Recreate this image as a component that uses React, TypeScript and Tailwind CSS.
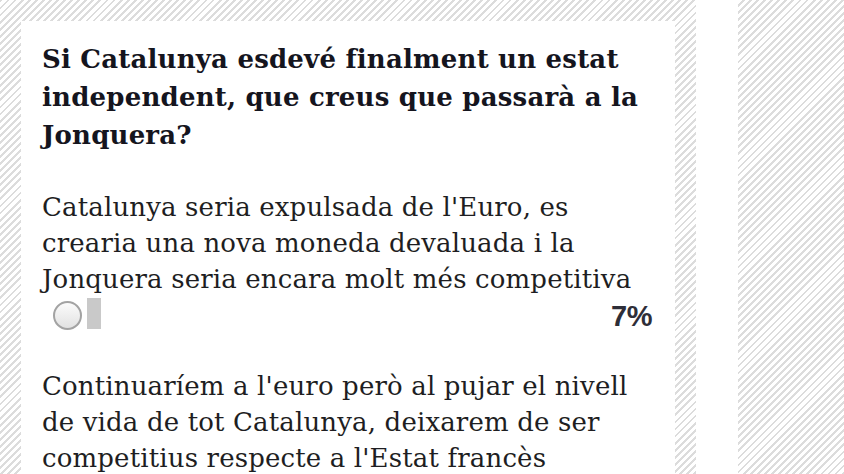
const stripes =
  "bg-[repeating-linear-gradient(135deg,#dcdcdc_0px,#dcdcdc_2px,#ffffff_2px,#ffffff_5px)]";

type Option = {
  text: string;
  percent?: number;
};

const options: Option[] = [
  {
    text: "Catalunya seria expulsada de l'Euro, es crearia una nova moneda devaluada i la Jonquera seria encara molt més competitiva",
    percent: 7,
  },
  {
    text: "Continuaríem a l'euro però al pujar el nivell de vida de tot Catalunya, deixarem de ser competitius respecte a l'Estat francès",
  },
];

const PollOption = ({ option }: { option: Option }) => (
  <div className="flex flex-col">
    <p className="text-[26px] leading-[36px] tracking-[0.15px] text-[#1e1e22]">{option.text}</p>
    {option.percent !== undefined && (
      <div className="flex items-center h-[33px] pl-[11px]">
        <span className="mt-[4px] w-[29px] h-[29px] rounded-full border-2 border-[#a3a3a3] bg-gradient-to-b from-[#fbfbfb] to-[#e2e2e2]" />
        <span className="ml-[5px] w-[14px] h-[31px] bg-[#c9c9c9]" />
        <span className="ml-auto mt-[6px] font-['Liberation_Sans',Arial,sans-serif] font-bold text-[29px] leading-none tracking-[-0.5px] text-[#2e2e38]">
          {option.percent}%
        </span>
      </div>
    )}
  </div>
);

export default function App() {
  return (
    <div
      className={`w-[844px] h-[474px] overflow-hidden flex ${stripes} font-['DejaVu_Serif',Georgia,serif]`}
    >
      <div className="pl-[21px] pt-[21px] pr-[21px]">
        {/* poll card */}
        <div className="w-[654px] h-[600px] bg-white pl-[21px] pr-[23px] pt-[19px]">
          <h2 className="font-bold text-[26px] leading-[38px] tracking-[0.2px] text-[#15151e]">
            Si Catalunya esdevé finalment un estat independent, que creus que passarà a la Jonquera?
          </h2>
          <div className="mt-[35px] flex flex-col gap-[38px]">
            {options.map((o, i) => (
              <PollOption key={i} option={o} />
            ))}
          </div>
        </div>
      </div>
      <div className="w-[42px] bg-white" />
      <div className="flex-1" />
    </div>
  );
}
